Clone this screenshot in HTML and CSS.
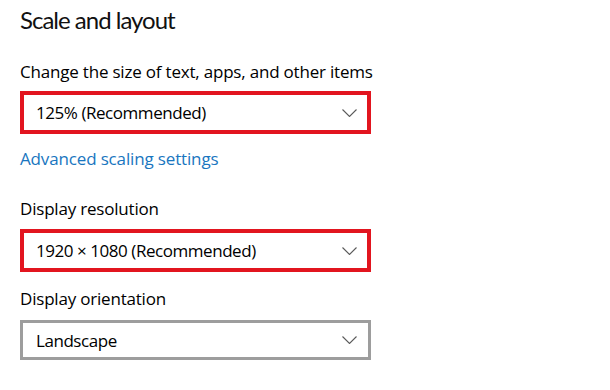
FILE: index.html
```html
<!DOCTYPE html>
<html>
<head>
<meta charset="utf-8">
<link rel="stylesheet" href="styles.css">
</head>
<body>
<div class="page">
  <h1 class="title">Scale and layout</h1>
  <div class="label first">Change the size of text, apps, and other items</div>
  <div class="select red first-select">
    <span class="value">125% (Recommended)</span>
    <svg class="chev" width="15" height="8" viewBox="0 0 15 8"><path d="M0.5 0.5 L7.5 7.5 L14.5 0.5" fill="none" stroke="#5a5a5a" stroke-width="1.1"/></svg>
  </div>
  <a class="link">Advanced scaling settings</a>
  <div class="label second">Display resolution</div>
  <div class="select red">
    <span class="value">1920 × 1080 (Recommended)</span>
    <svg class="chev" width="15" height="8" viewBox="0 0 15 8"><path d="M0.5 0.5 L7.5 7.5 L14.5 0.5" fill="none" stroke="#5a5a5a" stroke-width="1.1"/></svg>
  </div>
  <div class="label third">Display orientation</div>
  <div class="select gray">
    <span class="value">Landscape</span>
    <svg class="chev" width="15" height="8" viewBox="0 0 15 8"><path d="M0.5 0.5 L7.5 7.5 L14.5 0.5" fill="none" stroke="#5a5a5a" stroke-width="1.1"/></svg>
  </div>
</div>
</body>
</html>
```
FILE: styles.css
```css
html, body {
  margin: 0;
  padding: 0;
  background: #ffffff;
}
.page {
  padding: 0 0 0 20px;
  font-family: "Open Sans", "Noto Sans", sans-serif;
  color: #000;
  display: flex;
  flex-direction: column;
  align-items: flex-start;
}
.title {
  margin: 0;
  padding-top: 1px;
  font-family: "Lato", "Open Sans", sans-serif;
  font-weight: 400;
  font-size: 24px;
  line-height: 37px;
  height: 37px;
  letter-spacing: -1px;
  color: #111;
}
.label {
  font-size: 17px;
  line-height: 22px;
  letter-spacing: -0.2px;
}
.label.first {
  margin-top: 23px;
}
.label.second {
  margin-top: 28px;
}
.label.third {
  margin-top: 16px;
}
.select {
  box-sizing: border-box;
  width: 351px;
  margin-top: 9px;
  display: flex;
  align-items: center;
  justify-content: space-between;
  background: #fff;
}
.select.first-select {
  margin-top: 8px;
}
.select.red {
  height: 43px;
  border: 4px solid #e2151f;
  padding: 0 10px 0 12px;
}
.select.gray {
  height: 40px;
  border: 3px solid #9d9d9d;
  padding: 0 11px 0 13px;
  margin-top: 10px;
}
.value {
  font-size: 17px;
  letter-spacing: -0.45px;
}
.chev {
  display: block;
}
.link {
  margin-top: 14px;
  font-size: 17px;
  line-height: 22px;
  color: #1976c0;
  letter-spacing: -0.15px;
}
```
